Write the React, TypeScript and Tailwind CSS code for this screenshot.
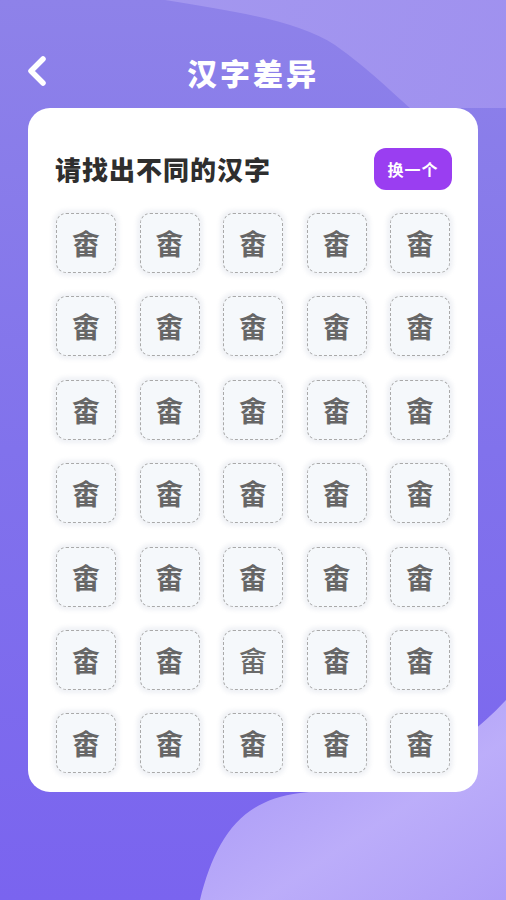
import React from "react"

const rows = 7
const cols = 5
const oddIndex = 5 * cols + 2

export default function App() {
  const cells = Array.from({ length: rows * cols }, (_, i) => i)

  return (
    <div
      className="relative w-[506px] h-[900px] overflow-hidden bg-gradient-to-b from-[#8e82e9] via-[#8172ec] to-[#7a64ef]"
      style={{ fontFamily: '"Noto Sans CJK SC", "Noto Sans", sans-serif' }}
    >
      {/* background waves */}
      <svg className="absolute inset-0 pointer-events-none" width="506" height="900" viewBox="0 0 506 900">
        <defs>
          <linearGradient id="topWave" x1="0" y1="0" x2="1" y2="0">
            <stop offset="0" stopColor="#a79bf0" />
            <stop offset="1" stopColor="#a394f0" />
          </linearGradient>
          <linearGradient id="bottomWave" x1="0" y1="0" x2="1" y2="1">
            <stop offset="0" stopColor="#a898f6" />
            <stop offset="0.6" stopColor="#c3b5fb" />
            <stop offset="1" stopColor="#b4a4f8" />
          </linearGradient>
        </defs>
        <path d="M165 0 C 240 12, 300 22, 335 45 C 370 70, 395 95, 410 108 L 506 108 L 506 0 Z" fill="url(#topWave)" opacity="0.85" />
        <path d="M200 900 C 215 840, 240 800, 300 793 C 390 785, 450 760, 506 700 L 506 900 Z" fill="url(#bottomWave)" opacity="0.9" />
      </svg>

      <div className="relative flex flex-col">
        <header className="relative h-[108px] flex items-center justify-center pt-[36px]">
          <svg className="absolute left-[24px] top-[54px]" width="26" height="34" viewBox="0 0 26 34">
            <polyline points="19,5 7,17 19,29" fill="none" stroke="#ffffff" strokeWidth="5.5" strokeLinecap="round" strokeLinejoin="round" />
          </svg>
          <h1 className="text-white text-[30px] font-black tracking-[3px] leading-none">汉字差异</h1>
        </header>

        <div className="mx-[28px] h-[684px] bg-white rounded-[22px] px-[28px] pt-[40px]">
          <div className="flex items-center justify-between h-[42px]">
            <h2 className="text-[#2e2e2e] text-[26px] font-black tracking-[1px] leading-none -ml-[1px]">请找出不同的汉字</h2>
            <button className="w-[78px] h-[42px] -mr-[2px] rounded-[12px] bg-[#9a3ef1] text-white text-[16px] font-bold tracking-[1px]">
              换一个
            </button>
          </div>

          <div className="grid grid-cols-5 gap-x-[23.5px] gap-y-[23.4px] mt-[23px]">
            {cells.map((i) => (
              <div
                key={i}
                className="w-[60px] h-[60px] rounded-[10px] bg-[#f5f8fb] border border-dashed border-[#a9a9a9] shadow-[0_0_4px_3px_rgba(228,232,238,0.6)] flex items-center justify-center"
              >
                <span
                  className={
                    i === oddIndex
                      ? "text-[28px] leading-none text-[#6a6a6a] font-medium"
                      : "text-[28px] leading-none text-[#666666] font-bold"
                  }
                >
                  {i === oddIndex ? "畲" : "畬"}
                </span>
              </div>
            ))}
          </div>
        </div>
      </div>
    </div>
  )
}
